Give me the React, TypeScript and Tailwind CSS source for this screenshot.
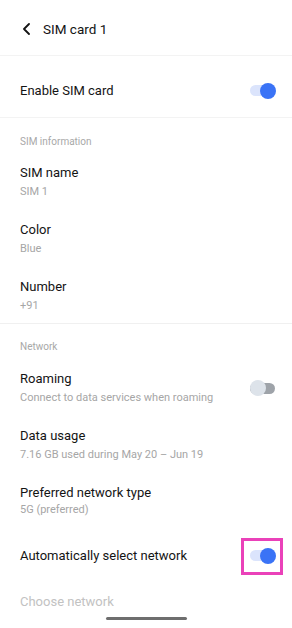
import React from "react";

function Toggle({ on }: { on: boolean }) {
  return (
    <div className="relative w-[26px] h-[16px] flex items-center">
      <div className={`w-[25px] h-[11px] rounded-full ${on ? "bg-[#dbe4fc]" : "bg-[#9ea3a9]"}`} />
      <div
        className={`absolute top-0 w-[16px] h-[16px] rounded-full ${on ? "left-[10px] bg-[#3a73f6]" : "left-0 bg-[#dde3ea]"}`}
      />
    </div>
  );
}

function TwoLine({ title, sub, gap = "mt-[2px]" }: { title: string; sub: string; gap?: string }) {
  return (
    <div className="px-5 pt-[11px] pb-[10px]">
      <div className="text-[13px] leading-[18px] text-[#141414]">{title}</div>
      <div className={`text-[11px] leading-[16px] text-[#a6a6a6] ${gap}`}>{sub}</div>
    </div>
  );
}

export default function App() {
  return (
    <div
      className="relative w-[292px] h-[628px] overflow-hidden bg-white"
      style={{ fontFamily: "Roboto, 'Noto Sans', sans-serif" }}
    >
      {/* Header */}
      <div className="h-[55px] flex items-center pl-[22px] pt-[3px]">
        <svg width="9" height="12" viewBox="0 0 9 12" className="mr-[12px]">
          <path d="M7 1 L2 6 L7 11" fill="none" stroke="#141414" strokeWidth="1.8" strokeLinecap="round" strokeLinejoin="round" />
        </svg>
        <span className="text-[13.5px] text-[#141414]">SIM card 1</span>
      </div>
      <div className="h-px bg-[#f3f3f3]" />

      {/* Enable */}
      <div className="h-[61px] pt-[8px] pl-5 pr-[16px] flex items-center justify-between">
        <span className="text-[13px] text-[#141414]">Enable SIM card</span>
        <Toggle on />
      </div>
      <div className="h-px bg-[#f3f3f3]" />

      {/* SIM information */}
      <div className="px-5 pt-[17px] pb-[4px]">
        <div className="text-[10px] leading-[14px] text-[#a8a8a8]">SIM information</div>
      </div>
      <TwoLine title="SIM name" sub="SIM 1" />
      <TwoLine title="Color" sub="Blue" />
      <div className="px-5 pt-[11px] pb-[9px]">
        <div className="text-[13px] leading-[18px] text-[#141414]">Number</div>
        <div className="text-[11px] leading-[16px] text-[#a6a6a6] mt-[2px]">+91</div>
      </div>
      <div className="h-px bg-[#f0f0f0]" />

      {/* Network */}
      <div className="px-5 pt-[16px] pb-[5px]">
        <div className="text-[10px] leading-[14px] text-[#a8a8a8]">Network</div>
      </div>
      <div className="pl-5 pr-[16px] pt-[11px] pb-[10px] flex items-center justify-between">
        <div>
          <div className="text-[13px] leading-[18px] text-[#141414]">Roaming</div>
          <div className="text-[11px] leading-[16px] text-[#a6a6a6] mt-[2px]">Connect to data services when roaming</div>
        </div>
        <Toggle on={false} />
      </div>
      <TwoLine title="Data usage" sub="7.16 GB used during May 20 – Jun 19" />
      <TwoLine title="Preferred network type" sub="5G (preferred)" gap="mt-0" />
      <div className="h-[54px] pl-5 pr-[16px] pt-[1px] flex items-center justify-between">
        <span className="text-[13px] text-[#141414]">Automatically select network</span>
        <div className="relative">
          <Toggle on />
          <div className="absolute left-[-9px] top-[-10px] w-[42px] h-[37px] border-[3px] border-[#ea41b9]" />
        </div>
      </div>
      <div className="px-5 pt-[11px]">
        <div className="text-[13px] leading-[18px] text-[#c2c2c2]">Choose network</div>
      </div>

      {/* Home indicator */}
      <div className="absolute left-[106px] top-[617px] w-[81px] h-[3px] rounded-full bg-[#6e6e6e]" />
    </div>
  );
}
